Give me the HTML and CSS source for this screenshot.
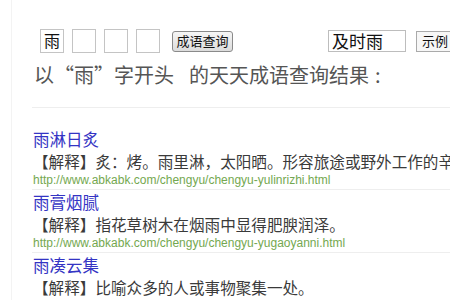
FILE: index.html
```html
<!DOCTYPE html>
<html lang="zh-CN">
<head>
<meta charset="utf-8">
<title>以“雨”字开头的成语</title>
<link rel="stylesheet" href="styles.css">
</head>
<body>
<div class="page">
  <div class="content">
    <form class="search">
      <span class="cell">雨</span>
      <span class="cell"></span>
      <span class="cell"></span>
      <span class="cell"></span>
      <span class="btn btn-query">成语查询</span>
      <span class="word">及时雨</span>
      <span class="btn btn-example">示例</span>
    </form>
    <h1 class="heading">以“雨”字开头<span class="gap"></span>的天天成语查询结果<span class="colon">:</span></h1>
    <div class="rule"></div>
    <ul class="results">
      <li class="item">
        <a class="title">雨淋日炙</a>
        <p class="desc">【解释】炙：烤。雨里淋，太阳晒。形容旅途或野外工作的辛苦。</p>
        <p class="url">http://www.abkabk.com/chengyu/chengyu-yulinrizhi.html</p>
      </li>
      <li class="item">
        <a class="title">雨膏烟腻</a>
        <p class="desc">【解释】指花草树木在烟雨中显得肥腴润泽。</p>
        <p class="url">http://www.abkabk.com/chengyu/chengyu-yugaoyanni.html</p>
      </li>
      <li class="item">
        <a class="title">雨凑云集</a>
        <p class="desc">【解释】比喻众多的人或事物聚集一处。</p>
        <p class="url">http://www.abkabk.com/chengyu/chengyu-yucouyunji.html</p>
      </li>
    </ul>
  </div>
</div>
</body>
</html>
```
FILE: styles.css
```css
html, body {
  margin: 0;
  padding: 0;
  background: #ffffff;
  overflow: hidden;
  width: 450px;
  height: 300px;
}
body {
  font-family: "Noto Sans CJK SC", "Liberation Sans", sans-serif;
  color: #333;
}
.page {
  margin-left: 11px;
  padding-top: 29px;
  border-left: 1px solid #f3f3f3;
  height: 300px;
}
.content {
  margin-left: 20px;
  width: 500px;
}
.search {
  display: flex;
  align-items: center;
  margin: 0 0 0 8px;
  height: 24px;
  white-space: nowrap;
}
.cell {
  box-sizing: border-box;
  width: 24px;
  height: 24px;
  border: 1px solid #c4c4c4;
  margin-right: 8px;
  font-size: 16px;
  line-height: 21px;
  text-align: center;
  color: #111;
}
.cell:nth-child(4) { margin-right: 12px; }
.btn {
  box-sizing: border-box;
  height: 21px;
  font-size: 13px;
  line-height: 18px;
  color: #111;
  border: 1px solid #8a8a8a;
  border-radius: 3px;
  background: linear-gradient(#f6f6f6, #dcdcdc);
  text-align: center;
}
.btn-query {
  width: 61px;
}
.word {
  box-sizing: border-box;
  width: 78px;
  height: 22px;
  margin-left: 95px;
  border: 1px solid #bdbdbd;
  font-size: 17px;
  line-height: 19px;
  padding-left: 3px;
  color: #111;
}
.btn-example {
  margin-left: 10px;
  width: 40px;
  border-color: #aaa;
  border-radius: 0;
  background: #f7f7f7;
  text-align: left;
  padding-left: 5px;
}
.heading {
  margin: 7px 0 0 0;
  padding-left: 2px;
  font-size: 20px;
  font-weight: normal;
  line-height: 30px;
  height: 30px;
  color: #555;
  white-space: nowrap;
}
.gap {
  display: inline-block;
  width: 15px;
}
.colon {
  margin-left: 6px;
}
.rule {
  margin-top: 17px;
  height: 1px;
  background: #eeeeee;
}
.results {
  list-style: none;
  margin: 19px 0 0 0;
  padding: 0;
}
.item {
  padding: 2px 0 0 1px;
  border-bottom: 1px solid #eeeeee;
  white-space: nowrap;
}
.title {
  display: block;
  font-size: 16.5px;
  line-height: 21px;
  height: 21px;
  color: #3434c4;
}
.desc {
  margin: 0;
  font-size: 15.6px;
  line-height: 22px;
  height: 22px;
  color: #3a3a3a;
}
.url {
  margin: 0;
  font-family: "Liberation Sans", Arial, sans-serif;
  font-size: 12px;
  line-height: 17px;
  height: 17px;
  color: #74a850;
}
```
